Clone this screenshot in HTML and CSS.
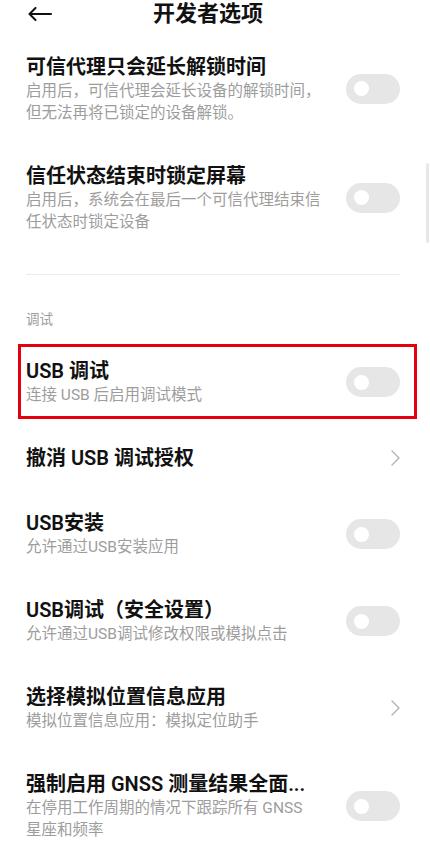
FILE: index.html
```html
<!DOCTYPE html>
<html lang="zh-CN">
<head>
  <meta charset="UTF-8">
  <meta name="viewport" content="width=device-width, initial-scale=1.0">
  <title>开发者选项</title>
  <link rel="stylesheet" href="styles.css">
</head>
<body>
  <header class="top-bar">
    <svg class="back-icon" width="24" height="14" viewBox="0 0 24 14">
      <path d="M23 7H1.5M7.5 1L1.5 7L7.5 13" fill="none" stroke="#111" stroke-width="2" stroke-linecap="round" stroke-linejoin="round"/>
    </svg>
    <h1>开发者选项</h1>
  </header>

  <div class="scroll-thumb"></div>

  <main class="settings">
    <div class="row">
      <div class="row-text">
        <div class="row-title">可信代理只会延长解锁时间</div>
        <div class="row-desc">启用后，可信代理会延长设备的解锁时间，但无法再将已锁定的设备解锁。</div>
      </div>
      <span class="switch"></span>
    </div>

    <div class="row">
      <div class="row-text">
        <div class="row-title">信任状态结束时锁定屏幕</div>
        <div class="row-desc">启用后，系统会在最后一个可信代理结束信任状态时锁定设备</div>
      </div>
      <span class="switch"></span>
    </div>

    <div class="divider"></div>
    <div class="section-label">调试</div>

    <!-- highlighted item -->
    <div class="row marked">
      <div class="row-text">
        <div class="row-title">USB 调试</div>
        <div class="row-desc">连接 USB 后启用调试模式</div>
      </div>
      <span class="switch"></span>
      <span class="mark-box"></span>
    </div>

    <div class="row">
      <div class="row-text">
        <div class="row-title">撤消 USB 调试授权</div>
      </div>
      <svg class="chevron" width="9" height="16" viewBox="0 0 9 16">
        <path d="M1 1L8 8L1 15" fill="none" stroke="#b3b3b3" stroke-width="1.4" stroke-linecap="round" stroke-linejoin="round"/>
      </svg>
    </div>

    <div class="row">
      <div class="row-text">
        <div class="row-title">USB安装</div>
        <div class="row-desc">允许通过USB安装应用</div>
      </div>
      <span class="switch"></span>
    </div>

    <div class="row">
      <div class="row-text">
        <div class="row-title">USB调试（安全设置）</div>
        <div class="row-desc">允许通过USB调试修改权限或模拟点击</div>
      </div>
      <span class="switch"></span>
    </div>

    <div class="row">
      <div class="row-text">
        <div class="row-title">选择模拟位置信息应用</div>
        <div class="row-desc">模拟位置信息应用：模拟定位助手</div>
      </div>
      <svg class="chevron" width="9" height="16" viewBox="0 0 9 16">
        <path d="M1 1L8 8L1 15" fill="none" stroke="#b3b3b3" stroke-width="1.4" stroke-linecap="round" stroke-linejoin="round"/>
      </svg>
    </div>

    <div class="row">
      <div class="row-text">
        <div class="row-title">强制启用 GNSS 测量结果全面...</div>
        <div class="row-desc">在停用工作周期的情况下跟踪所有 GNSS<br>星座和频率</div>
      </div>
      <span class="switch"></span>
    </div>
  </main>
</body>
</html>
```

FILE: styles.css
```css
body {
  margin: 0;
  background-color: #fff;
  font-family: Roboto, "Noto Sans CJK SC", sans-serif;
  color: #111;
  overflow: hidden;
}
.top-bar {
  display: flex;
  align-items: center;
  height: 28px;
  padding: 0 66px 6px 28px;
}
.back-icon {
  flex: none;
}
.top-bar h1 {
  flex: 1;
  margin: 0;
  text-align: center;
  font-size: 22px;
  line-height: 28px;
  font-weight: 600;
}
.scroll-thumb {
  position: fixed;
  right: 1px;
  top: 163px;
  width: 3px;
  height: 80px;
  border-radius: 2px;
  background-color: #e8e8e8;
}
.settings {
  padding: 0 30px 0 26px;
}
.row {
  display: flex;
  align-items: center;
  justify-content: space-between;
  padding: 19.5px 0;
}
.row-text {
  width: 308px;
}
.row-title {
  font-size: 20px;
  line-height: 26px;
  font-weight: 600;
  color: #111;
  white-space: nowrap;
}
.row-desc {
  font-size: 15.5px;
  line-height: 22px;
  color: #9d9d9d;
}
.switch {
  position: relative;
  flex: none;
  width: 54px;
  height: 30px;
  border-radius: 15px;
  background-color: #e6e6e6;
}
.switch::after {
  content: "";
  position: absolute;
  left: 8px;
  top: 7.5px;
  width: 15px;
  height: 15px;
  border-radius: 50%;
  background-color: #fff;
}
.chevron {
  flex: none;
}
.divider {
  height: 1px;
  margin-top: 22px;
  background-color: #ececec;
}
.section-label {
  margin-top: 34px;
  padding-bottom: 9.5px;
  font-size: 13.5px;
  line-height: 20px;
  color: #9d9d9d;
}
.marked {
  position: relative;
}
.mark-box {
  position: absolute;
  top: 5.5px;
  bottom: 6.5px;
  left: -8px;
  right: -17px;
  border: 3px solid #e3000f;
}
```
